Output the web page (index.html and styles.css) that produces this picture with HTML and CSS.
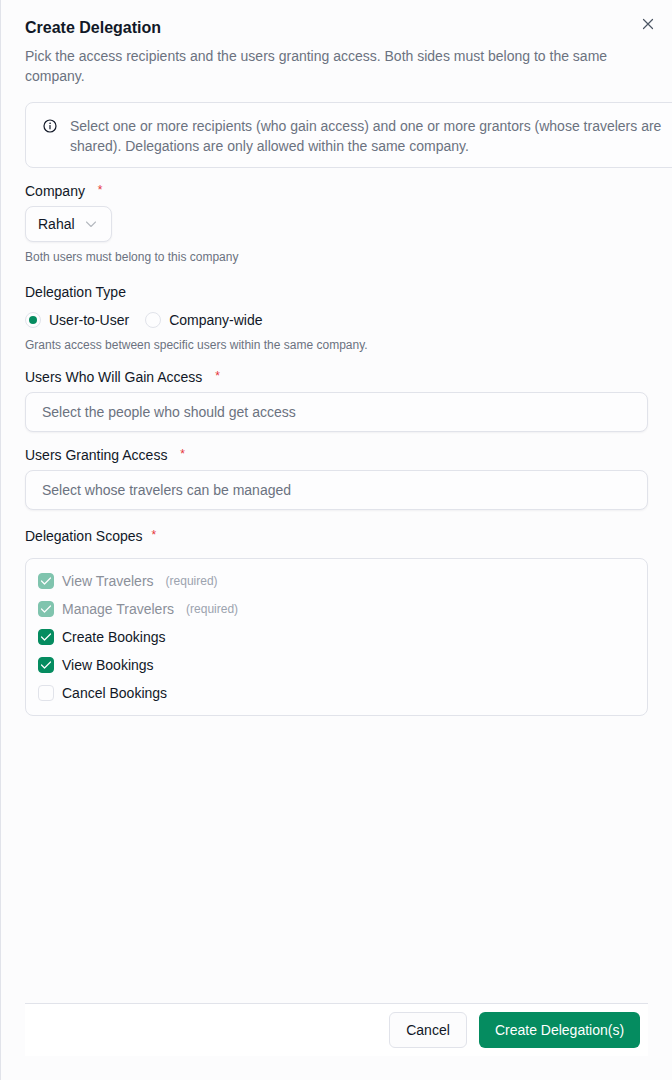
FILE: index.html
```html
<!DOCTYPE html>
<html lang="en">
<head>
    <meta charset="UTF-8">
    <meta name="viewport" content="width=device-width, initial-scale=1.0">
    <title>Create Delegation</title>
    <link rel="stylesheet" href="styles.css">
</head>
<body>

    <div class="drawer">
        <button class="close-btn" aria-label="Close">
            <svg width="12" height="12" viewBox="0 0 12 12" fill="none" stroke="#4b5563" stroke-width="1.2" stroke-linecap="round">
                <path d="M1.5 1.5L10.5 10.5M10.5 1.5L1.5 10.5"/>
            </svg>
        </button>

        <h1 class="title">Create Delegation</h1>
        <p class="subtitle">Pick the access recipients and the users granting access. Both sides must belong to the same company.</p>

        <div class="info-box">
            <svg class="info-icon" width="16" height="16" viewBox="0 0 16 16" fill="none" stroke="#111827" stroke-width="1.2" stroke-linecap="round">
                <circle cx="8" cy="8" r="6"/>
                <path d="M8 7.5V10.8"/>
                <circle cx="8" cy="5.2" r="0.4" fill="#111827" stroke-width="0.6"/>
            </svg>
            <p>Select one or more recipients (who gain access) and one or more grantors (whose travelers are shared). Delegations are only allowed within the same company.</p>
        </div>

        <div class="field field-company">
            <div class="label">Company <span class="req">*</span></div>
            <div class="select-small">
                <span>Rahal</span>
                <svg width="12" height="12" viewBox="0 0 12 12" fill="none" stroke="#b5b9c0" stroke-width="1.1" stroke-linecap="round" stroke-linejoin="round">
                    <path d="M1.5 4L6 8.5L10.5 4"/>
                </svg>
            </div>
            <div class="hint">Both users must belong to this company</div>
        </div>

        <div class="field field-type">
            <div class="label">Delegation Type</div>
            <div class="radios">
                <label class="radio"><span class="radio-dot checked"></span>User-to-User</label>
                <label class="radio"><span class="radio-dot"></span>Company-wide</label>
            </div>
            <div class="hint">Grants access between specific users within the same company.</div>
        </div>

        <div class="field field-gain">
            <div class="label">Users Who Will Gain Access <span class="req">*</span></div>
            <div class="input">Select the people who should get access</div>
        </div>

        <div class="field field-grant">
            <div class="label">Users Granting Access <span class="req">*</span></div>
            <div class="input">Select whose travelers can be managed</div>
        </div>

        <div class="field field-scopes">
            <div class="label">Delegation Scopes <span class="req req-close">*</span></div>
            <div class="scopes">
                <label class="scope disabled">
                    <span class="check on"><svg width="12" height="12" viewBox="0 0 12 12" fill="none" stroke="#fff" stroke-width="1.2" stroke-linecap="round" stroke-linejoin="round"><path d="M1.5 6L4.5 9L10.5 3"/></svg></span>
                    View Travelers <small>(required)</small>
                </label>
                <label class="scope disabled">
                    <span class="check on"><svg width="12" height="12" viewBox="0 0 12 12" fill="none" stroke="#fff" stroke-width="1.2" stroke-linecap="round" stroke-linejoin="round"><path d="M1.5 6L4.5 9L10.5 3"/></svg></span>
                    Manage Travelers <small>(required)</small>
                </label>
                <label class="scope">
                    <span class="check on"><svg width="12" height="12" viewBox="0 0 12 12" fill="none" stroke="#fff" stroke-width="1.2" stroke-linecap="round" stroke-linejoin="round"><path d="M1.5 6L4.5 9L10.5 3"/></svg></span>
                    Create Bookings
                </label>
                <label class="scope">
                    <span class="check on"><svg width="12" height="12" viewBox="0 0 12 12" fill="none" stroke="#fff" stroke-width="1.2" stroke-linecap="round" stroke-linejoin="round"><path d="M1.5 6L4.5 9L10.5 3"/></svg></span>
                    View Bookings
                </label>
                <label class="scope">
                    <span class="check"></span>
                    Cancel Bookings
                </label>
            </div>
        </div>

        <div class="footer">
            <button class="btn btn-cancel">Cancel</button>
            <button class="btn btn-primary">Create Delegation(s)</button>
        </div>
    </div>

</body>
</html>
```

FILE: styles.css
```css
* {
    box-sizing: border-box;
    margin: 0;
    padding: 0;
}

html, body {
    height: 100%;
}

body {
    background: #fcfcfd;
    font-family: "Liberation Sans", Arial, sans-serif;
    font-size: 14px;
    color: #111827;
    overflow: hidden;
}

.drawer {
    position: relative;
    display: flex;
    flex-direction: column;
    width: 672px;
    height: 1080px;
    padding: 19px 24px 24px;
    border-left: 1px solid #e1e3ea;
    overflow: hidden;
}

.close-btn {
    position: absolute;
    top: 18px;
    right: 18px;
    width: 12px;
    height: 12px;
    border: none;
    background: none;
    line-height: 0;
}

.title {
    font-size: 16px;
    font-weight: 700;
    line-height: 18px;
    color: #111827;
}

.subtitle {
    margin-top: 9px;
    width: 600px;
    line-height: 20px;
    color: #6b7280;
}

/* Info box runs off the right edge */
.info-box {
    display: flex;
    flex-shrink: 0;
    gap: 12px;
    width: 660px;
    height: 66px;
    margin-top: 16px;
    padding: 13px 16px;
    background: #fdfdfe;
    border: 1px solid #e1e3ea;
    border-radius: 8px;
}

.info-icon {
    flex-shrink: 0;
    margin-top: 1.5px;
}

.info-box p {
    width: 600px;
    line-height: 20px;
    color: #6b7280;
}

.field-company { margin-top: 13px; }
.field-type { margin-top: 17px; }
.field-gain { margin-top: 14px; }
.field-grant { margin-top: 13px; }
.field-scopes { margin-top: 16px; }

.label {
    line-height: 20px;
    color: #111827;
}

.req {
    margin-left: 9px;
    font-size: 12px;
    line-height: 0;
    vertical-align: 2.5px;
    color: #e5343a;
}

.req-close {
    margin-left: 5px;
}

.select-small {
    display: flex;
    align-items: center;
    gap: 10px;
    width: 87px;
    height: 36px;
    margin-top: 5px;
    padding: 0 12px;
    background: #fdfdfe;
    border: 1px solid #e1e3ea;
    border-radius: 8px;
    box-shadow: 0 1px 2px rgba(16, 24, 40, 0.05);
}

.hint {
    margin-top: 7px;
    font-size: 12px;
    line-height: 16px;
    color: #6b7280;
}

.radios {
    display: flex;
    gap: 16px;
    margin-top: 8px;
    height: 20px;
}

.radio {
    display: flex;
    align-items: center;
    gap: 8px;
}

.radio-dot {
    display: flex;
    align-items: center;
    justify-content: center;
    width: 16px;
    height: 16px;
    background: #fdfdfe;
    border: 1px solid #e1e3ea;
    border-radius: 50%;
}

.radio-dot.checked::after {
    content: "";
    width: 8px;
    height: 8px;
    background: #058c60;
    border-radius: 50%;
}

.input {
    display: flex;
    align-items: center;
    width: 623px;
    height: 40px;
    margin-top: 5px;
    padding: 0 16px;
    background: #fdfdfe;
    border: 1px solid #e1e3ea;
    border-radius: 8px;
    box-shadow: 0 1px 2px rgba(16, 24, 40, 0.05);
    color: #6b7280;
}

.scopes {
    display: flex;
    flex-direction: column;
    gap: 8px;
    width: 623px;
    height: 158px;
    margin-top: 12px;
    padding: 12px;
    background: #fdfdfe;
    border: 1px solid #e1e3ea;
    border-radius: 8px;
}

.scope {
    display: flex;
    align-items: center;
    gap: 8px;
    height: 20px;
}

.scope small {
    margin-left: 4px;
    font-size: 12px;
    color: #9ca3af;
}

.scope.disabled {
    color: #8b909a;
}

.check {
    display: flex;
    align-items: center;
    justify-content: center;
    width: 16px;
    height: 16px;
    background: #fdfdfe;
    border: 1px solid #e1e3ea;
    border-radius: 4px;
}

.check.on {
    background: #058c60;
    border-color: #058c60;
}

.scope.disabled .check {
    opacity: 0.5;
}

.footer {
    display: flex;
    justify-content: flex-end;
    gap: 12px;
    width: 623px;
    height: 53px;
    margin-top: auto;
    padding: 8px;
    background: #fff;
    border-top: 1px solid #e1e3ea;
}

.btn {
    height: 36px;
    font-family: inherit;
    font-size: 14px;
    border-radius: 6px;
}

.btn-cancel {
    width: 78px;
    background: #fcfcfd;
    border: 1px solid #e1e3ea;
    color: #111827;
}

.btn-primary {
    width: 161px;
    background: #058c60;
    border: none;
    color: #fff;
}
```
